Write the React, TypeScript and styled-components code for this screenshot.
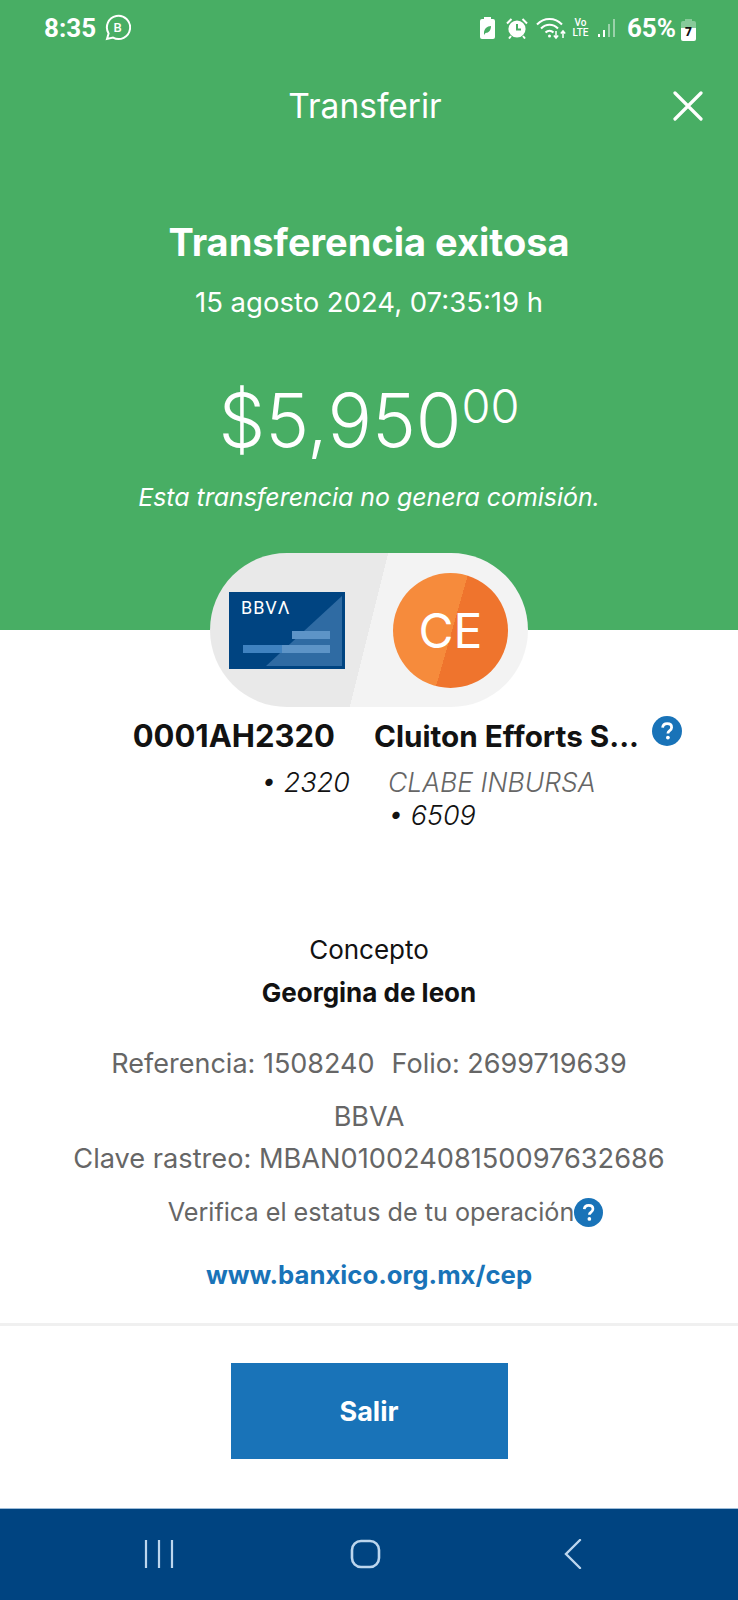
import React from "react";
import styled, { createGlobalStyle } from "styled-components";

const GlobalStyle = createGlobalStyle`
  html, body {
    margin: 0;
    padding: 0;
    background: #fff;
  }
  * {
    box-sizing: border-box;
  }
`;

const Screen = styled.div`
  width: 738px;
  height: 1600px;
  display: flex;
  flex-direction: column;
  overflow: hidden;
  background: #fff;
  font-family: Inter, "Liberation Sans", sans-serif;
  color: #121212;
`;

const Header = styled.header`
  height: 630px;
  flex: none;
  display: flex;
  flex-direction: column;
  align-items: center;
  background: #48ae64;
  color: #fff;
  & > * {
    flex: none;
  }
`;

const StatusBar = styled.div`
  align-self: stretch;
  height: 56px;
  padding: 0 42px 0 44px;
  display: flex;
  align-items: center;
  justify-content: space-between;
  font-family: Roboto, sans-serif;
  font-weight: 700;
  font-size: 26px;
`;

const StatusGroup = styled.div`
  display: flex;
  align-items: center;
  gap: ${(p: { $gap: number }) => p.$gap}px;
`;

const AlarmSlot = styled.span`
  display: flex;
  margin-right: -3px;
`;

const NetworkLabel = styled.span`
  width: 17px;
  margin: 0 -2px 0 -5px;
  font-size: 10px;
  line-height: 10px;
  font-weight: 500;
  text-align: center;
`;

const BatteryLevel = styled.div`
  position: relative;
  width: 15px;
  height: 22px;
  margin-left: -6px;
`;

const BatteryDigit = styled.span`
  position: absolute;
  left: 0;
  right: 0;
  bottom: 0;
  font-size: 12px;
  line-height: 14px;
  font-weight: 900;
  text-align: center;
  color: #111;
`;

const TitleBar = styled.div`
  align-self: stretch;
  height: 48px;
  margin-top: 26px;
  padding: 0 35px 0 27px;
  display: grid;
  grid-template-columns: 1fr auto 1fr;
  align-items: center;
`;

const ScreenTitle = styled.h1`
  grid-column: 2;
  margin: 0;
  font-size: 33.5px;
  line-height: 48px;
  font-weight: 400;
`;

const CloseButton = styled.button`
  justify-self: end;
  width: 30px;
  height: 30px;
  padding: 0;
  border: 0;
  background: none;
  color: inherit;
  display: flex;
`;

const Heading = styled.h2`
  margin: 87px 0 0;
  font-size: 38px;
  line-height: 50px;
  font-weight: 700;
`;

const DateLine = styled.div`
  margin-top: 15px;
  font-size: 27.5px;
  line-height: 40px;
  font-weight: 400;
`;

const Amount = styled.div`
  margin-top: 53px;
  display: flex;
  font-size: 74px;
  line-height: 90px;
  font-weight: 300;
`;

const Cents = styled.span`
  font-size: 47px;
  line-height: 62px;
`;

const Note = styled.div`
  margin-top: 14px;
  font-size: 24.9px;
  line-height: 36px;
  font-style: italic;
  font-weight: 400;
`;

const AccountPill = styled.div`
  width: 318px;
  height: 154px;
  margin: 38px 0 -77px;
  padding: 0 20px 0 19px;
  border-radius: 77px;
  display: flex;
  align-items: center;
  justify-content: space-between;
  background: linear-gradient(104deg, #e9e9e9 50%, #f3f3f3 50%);
`;

const Initials = styled.div`
  width: 115px;
  height: 115px;
  border-radius: 50%;
  display: flex;
  align-items: center;
  justify-content: center;
  font-size: 48px;
  font-weight: 400;
  color: #fff;
  background: linear-gradient(106deg, #f68b3c 51%, #ef742d 51%);
`;

const Main = styled.main`
  flex: 1;
  padding-top: 86px;
  display: flex;
  flex-direction: column;
  align-items: center;
`;

const Accounts = styled.div`
  align-self: stretch;
  display: grid;
  grid-template-columns: 350px 1fr;
  column-gap: 24px;
`;

const AccountColumn = styled.div<{ $end?: boolean }>`
  display: flex;
  flex-direction: column;
  align-items: ${(p) => (p.$end ? "flex-end" : "flex-start")};
`;

const AccountName = styled.div<{ $size: number; $inset?: number }>`
  display: flex;
  align-items: flex-start;
  gap: 13px;
  margin: 0 ${(p) => p.$inset ?? 0}px 10px 0;
  font-size: ${(p) => p.$size}px;
  line-height: 40px;
  font-weight: 700;
  white-space: nowrap;
`;

const AccountDetail = styled.div<{ $muted?: boolean }>`
  font-size: ${(p) => (p.$muted ? 26.5 : 27)}px;
  line-height: 33px;
  font-style: italic;
  font-weight: 300;
  color: ${(p) => (p.$muted ? "#666" : "#121212")};
`;

const DetailGroup = styled.div`
  padding-left: 14px;
`;

const Concept = styled.div`
  margin-top: 98px;
  font-size: 26px;
  line-height: 40px;
  font-weight: 400;
`;

const ConceptValue = styled.div`
  margin-top: 3px;
  font-size: 26px;
  line-height: 40px;
  font-weight: 700;
`;

const InfoLine = styled.div<{ $top: number; $size?: number; $shift?: number }>`
  margin-top: ${(p) => p.$top}px;
  margin-left: ${(p) => p.$shift ?? 0}px;
  display: flex;
  align-items: center;
  font-size: ${(p) => p.$size ?? 27}px;
  line-height: 40px;
  font-weight: 400;
  color: #666;
`;

const Reference = styled.span`
  margin-right: 17px;
`;

const Link = styled.a`
  margin-top: 23px;
  font-size: 25.7px;
  line-height: 40px;
  font-weight: 700;
  color: #1973b8;
  text-decoration: none;
`;

const Actions = styled.div`
  align-self: stretch;
  margin-top: 28px;
  padding-top: 37px;
  border-top: 3px solid #f0f0f0;
  display: flex;
  justify-content: center;
`;

const ExitButton = styled.button`
  width: 277px;
  height: 96px;
  border: 0;
  font: inherit;
  font-size: 27px;
  font-weight: 700;
  color: #fff;
  background: #1973b8;
`;

const NavBar = styled.nav`
  height: 92px;
  flex: none;
  padding-bottom: 2px;
  border-top: 1px solid #9dbcd8;
  display: flex;
  align-items: center;
  color: #bcd6ee;
  background: #004481;
`;

const NavSlot = styled.div<{ $left: number; $width: number }>`
  margin-left: ${(p) => p.$left}px;
  width: ${(p) => p.$width}px;
  display: flex;
`;

const HelpBadge = ({ size = 30 }: { size?: number }) => (
  <svg width={size} height={size} viewBox="0 0 30 30" style={{ flex: "none" }}>
    <circle cx="15" cy="15" r="15" fill="#1973b8" />
    <path
      d="M10.6 11.6c.3-2.6 2.2-3.9 4.6-3.9 2.6 0 4.4 1.5 4.4 3.7 0 1.7-1 2.6-2.2 3.5-1 .7-1.5 1.2-1.5 2.5"
      fill="none"
      stroke="#fff"
      strokeWidth="2.8"
    />
    <circle cx="15.9" cy="21.6" r="1.9" fill="#fff" />
  </svg>
);

const BusinessChat = () => (
  <svg width="27" height="28" viewBox="0 0 27 28" fill="none" stroke="#fff" strokeWidth="2">
    <path d="M3 25l1.6-5.6A11.6 11.6 0 1 1 9 23.6z" />
    <text x="13.5" y="18" textAnchor="middle" fontSize="13" fontWeight="500" fill="#fff" stroke="none">
      B
    </text>
  </svg>
);

const SaverBattery = () => (
  <svg width="15" height="22" viewBox="0 0 15 22" fill="#fff">
    <path d="M4 0h7v2h2a2 2 0 0 1 2 2v16a2 2 0 0 1-2 2H2a2 2 0 0 1-2-2V4a2 2 0 0 1 2-2h2z" />
    <path d="M4 16c0-4 3-7 7-7 0 4-2 7-5.5 7L4 18z" fill="#48ae64" />
  </svg>
);

const Alarm = () => (
  <svg width="22" height="22" viewBox="0 0 22 22">
    <circle cx="11" cy="12" r="8.6" fill="#fff" />
    <path d="M11 7v5.5h4" fill="none" stroke="#48ae64" strokeWidth="2" />
    <path d="M1 6.5L5.500 2M21 6.500L16.500 2M5 19l-2 2.500M17 19l2 2.500" stroke="#fff" strokeWidth="2" fill="none" />
  </svg>
);

const Wifi = () => (
  <svg width="30" height="24" viewBox="0 0 30 24" fill="none" stroke="#fff" strokeWidth="2">
    <path d="M1 8.500C8 1 19 1 26 8.500M5 12.500c5-5 12-5 17 0M9.500 16.500c2.500-2.500 5.500-2.500 8 0" />
    <circle cx="13.500" cy="20" r="1.500" fill="#fff" stroke="none" />
    <path d="M20 15v7M17.800 19.500l2.200 2.500 2.200-2.500M27 22v-7M24.800 17.500l2.200-2.500 2.200 2.500" strokeWidth="1.500" />
  </svg>
);

const Signal = () => (
  <svg width="18" height="20" viewBox="0 0 18 20">
    <rect x="0" y="16" width="2" height="3" fill="#fff" />
    <rect x="5" y="12" width="2" height="7" fill="#fff" />
    <rect x="10" y="6" width="2" height="13" fill="#fff" opacity=".45" />
    <rect x="15" y="1" width="2" height="18" fill="#fff" opacity=".45" />
  </svg>
);

const BatteryShape = () => (
  <svg width="15" height="22" viewBox="0 0 15 22">
    <path d="M4 0h7v2h2a2 2 0 0 1 2 2v5H0V4a2 2 0 0 1 2-2h2z" fill="#fff" opacity=".35" />
    <path d="M0 9h15v11a2 2 0 0 1-2 2H2a2 2 0 0 1-2-2z" fill="#fff" />
  </svg>
);

const BankCard = () => (
  <svg width="116" height="77" viewBox="0 0 116 77">
    <rect width="116" height="77" fill="#004481" />
    <path d="M113 4v70H37z" fill="#2f6ba3" />
    <rect x="63" y="39" width="38" height="8" fill="#4f8fc9" />
    <rect x="14" y="53" width="87" height="8" fill="#3f82c0" />
    <path d="M63 39h38v8H63zM53 53h48v8H53z" fill="#5d94c7" />
    <text x="12" y="22" fontFamily="Roboto, sans-serif" fontSize="18" fontWeight="400" letterSpacing="1" fill="#fff">
      BBVΛ
    </text>
  </svg>
);

export default function App() {
  return (
    <Screen>
      <GlobalStyle />
      <Header>
        <StatusBar>
          <StatusGroup $gap={8}>
            8:35
            <BusinessChat />
          </StatusGroup>
          <StatusGroup $gap={11}>
            <SaverBattery />
            <AlarmSlot>
              <Alarm />
            </AlarmSlot>
            <Wifi />
            <NetworkLabel>
              Vo
              <br />
              LTE
            </NetworkLabel>
            <Signal />
            <span>65%</span>
            <BatteryLevel>
              <BatteryShape />
              <BatteryDigit>7</BatteryDigit>
            </BatteryLevel>
          </StatusGroup>
        </StatusBar>
        <TitleBar>
          <ScreenTitle>Transferir</ScreenTitle>
          <CloseButton aria-label="Cerrar">
            <svg width="30" height="30" viewBox="0 0 30 30" stroke="currentColor" strokeWidth="3.2" strokeLinecap="round">
              <path d="M2 2l26 26M28 2L2 28" />
            </svg>
          </CloseButton>
        </TitleBar>
        <Heading>Transferencia exitosa</Heading>
        <DateLine>15 agosto 2024, 07:35:19 h</DateLine>
        <Amount>
          $5,950<Cents>00</Cents>
        </Amount>
        <Note>Esta transferencia no genera comisión.</Note>
        <AccountPill>
          <BankCard />
          <Initials>CE</Initials>
        </AccountPill>
      </Header>

      <Main>
        <Accounts>
          <AccountColumn $end>
            <AccountName $size={31} $inset={15}>
              0001AH2320
            </AccountName>
            <AccountDetail>• 2320</AccountDetail>
          </AccountColumn>
          <AccountColumn>
            <AccountName $size={29.7}>
              Cluiton Efforts S...
              <HelpBadge />
            </AccountName>
            <DetailGroup>
              <AccountDetail $muted>CLABE INBURSA</AccountDetail>
              <AccountDetail>• 6509</AccountDetail>
            </DetailGroup>
          </AccountColumn>
        </Accounts>

        <Concept>Concepto</Concept>
        <ConceptValue>Georgina de leon</ConceptValue>

        <InfoLine $top={31}>
          <Reference>Referencia: 1508240</Reference>
          Folio: 2699719639
        </InfoLine>
        <InfoLine $top={13}>BBVA</InfoLine>
        <InfoLine $top={2} $size={27.2}>
          Clave rastreo: MBAN01002408150097632686
        </InfoLine>
        <InfoLine $top={13} $size={25.2} $shift={33}>
          Verifica el estatus de tu operación
          <HelpBadge size={29} />
        </InfoLine>
        <Link href="#cep">www.banxico.org.mx/cep</Link>

        <Actions>
          <ExitButton>Salir</ExitButton>
        </Actions>
      </Main>

      <NavBar>
        <NavSlot $left={144} $width={30}>
          <svg width="30" height="30" viewBox="0 0 30 30" stroke="currentColor" strokeWidth="2.2">
            <path d="M2 1v28M15 1v28M28 1v28" />
          </svg>
        </NavSlot>
        <NavSlot $left={176} $width={32}>
          <svg width="32" height="30" viewBox="0 0 32 30" fill="none" stroke="currentColor" strokeWidth="2.6">
            <rect x="2" y="2" width="27" height="26" rx="9" />
          </svg>
        </NavSlot>
        <NavSlot $left={181} $width={20}>
          <svg width="20" height="30" viewBox="0 0 20 30" fill="none" stroke="currentColor" strokeWidth="2.4" strokeLinecap="round">
            <path d="M17 1L3 15l14 14" />
          </svg>
        </NavSlot>
      </NavBar>
    </Screen>
  );
}
